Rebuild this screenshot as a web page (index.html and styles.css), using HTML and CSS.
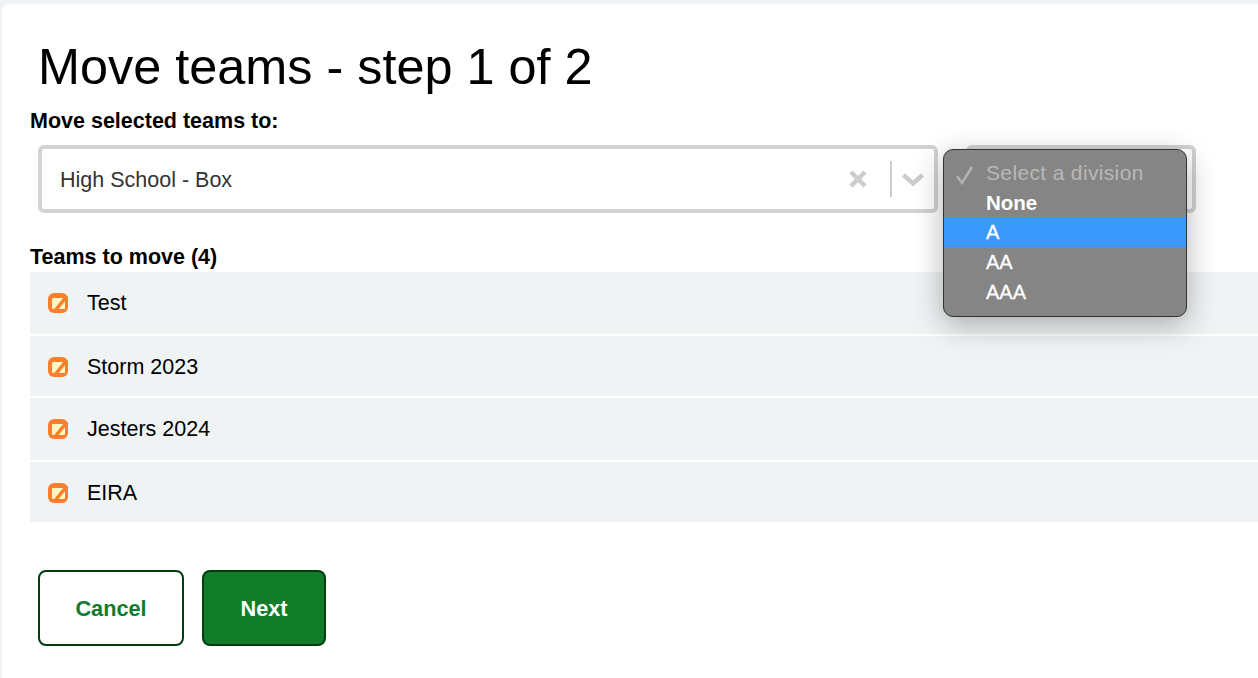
FILE: index.html
```html
<!DOCTYPE html>
<html lang="en">
<head>
    <meta charset="UTF-8">
    <title>Move teams</title>
    <link rel="stylesheet" href="styles.css">
</head>
<body>
    <div class="card">
        <h1 class="page-title">Move teams - step 1 of 2</h1>
        <div class="field-label">Move selected teams to:</div>
        <div class="select-row">
            <div class="select-box select-main">
                <span class="select-value">High School - Box</span>
                <svg class="select-clear" width="20" height="20" viewBox="0 0 20 20"><path d="M3 3L17 17M17 3L3 17" stroke="#cccccc" stroke-width="4.5" fill="none"/></svg>
                <span class="select-sep"></span>
                <svg class="select-arrow" width="22" height="14" viewBox="0 0 22 14"><path d="M1.5 3L11 11.5L20.5 3" stroke="#cccccc" stroke-width="4.5" fill="none"/></svg>
            </div>
            <div class="select-box select-division"></div>
        </div>
        <div class="field-label teams-label">Teams to move (4)</div>
        <ul class="team-list">
            <li class="team-row">
                <svg class="team-icon" width="22" height="22" viewBox="0 0 22 22"><rect x="1" y="1" width="20" height="20" rx="6" fill="#fb7e2d"/><rect x="5" y="6" width="13" height="11" rx="1" fill="#fff6c4"/><path d="M7 20L20 4" stroke="#fb7e2d" stroke-width="3.5"/></svg>
                <span>Test</span>
            </li>
            <li class="team-row">
                <svg class="team-icon" width="22" height="22" viewBox="0 0 22 22"><rect x="1" y="1" width="20" height="20" rx="6" fill="#fb7e2d"/><rect x="5" y="6" width="13" height="11" rx="1" fill="#fff6c4"/><path d="M7 20L20 4" stroke="#fb7e2d" stroke-width="3.5"/></svg>
                <span>Storm 2023</span>
            </li>
            <li class="team-row">
                <svg class="team-icon" width="22" height="22" viewBox="0 0 22 22"><rect x="1" y="1" width="20" height="20" rx="6" fill="#fb7e2d"/><rect x="5" y="6" width="13" height="11" rx="1" fill="#fff6c4"/><path d="M7 20L20 4" stroke="#fb7e2d" stroke-width="3.5"/></svg>
                <span>Jesters 2024</span>
            </li>
            <li class="team-row">
                <svg class="team-icon" width="22" height="22" viewBox="0 0 22 22"><rect x="1" y="1" width="20" height="20" rx="6" fill="#fb7e2d"/><rect x="5" y="6" width="13" height="11" rx="1" fill="#fff6c4"/><path d="M7 20L20 4" stroke="#fb7e2d" stroke-width="3.5"/></svg>
                <span>EIRA</span>
            </li>
        </ul>
        <div class="actions">
            <button class="btn btn-cancel">Cancel</button>
            <button class="btn btn-next">Next</button>
        </div>
        <div class="division-menu">
            <div class="menu-item menu-placeholder">
                <svg class="menu-check" width="20" height="20" viewBox="0 0 20 20"><path d="M2 11L7 18L17 2" stroke="#b4b4b4" stroke-width="2.4" fill="none"/></svg>
                Select a division
            </div>
            <div class="menu-item menu-none">None</div>
            <div class="menu-item menu-active">A</div>
            <div class="menu-item">AA</div>
            <div class="menu-item">AAA</div>
        </div>
    </div>
</body>
</html>
```

FILE: styles.css
```css
* {
    margin: 0;
    padding: 0;
    box-sizing: border-box;
    font-family: "Liberation Sans", Arial, sans-serif;
}

body {
    width: 1258px;
    height: 678px;
    overflow: hidden;
    background-color: #eff3f5;
    padding: 4px 0 0 2px;
}

.card {
    position: relative;
    height: 674px;
    background-color: white;
    border-radius: 8px 0 0 0;
    padding: 27px 0 0 28px;
}

.page-title {
    margin-left: 8px;
    font-size: 50.4px;
    line-height: 72px;
    font-weight: 400;
    color: #000;
}

.field-label {
    margin-top: 6px;
    font-size: 21.5px;
    line-height: 24px;
    font-weight: 700;
    color: #000;
}

.select-row {
    display: flex;
    gap: 28px;
    margin: 12px 0 0 8px;
}

.select-box {
    height: 68px;
    border: 4px solid #d2d2d2;
    border-radius: 6px;
    background-color: white;
}

.select-main {
    width: 900px;
    display: flex;
    align-items: center;
    padding: 0 10px 0 18px;
}

.select-division {
    width: 230px;
}

.select-value {
    flex: 1;
    padding-top: 2px;
    font-size: 21.5px;
    color: #333;
}

.select-clear {
    margin-right: 22px;
}

.select-sep {
    width: 2px;
    height: 36px;
    background-color: #cccccc;
    margin-right: 10px;
}

.teams-label {
    margin-top: 32px;
}

.team-list {
    list-style: none;
    display: flex;
    flex-direction: column;
    gap: 2px;
    margin-top: 3px;
}

.team-row {
    height: 60px;
    display: flex;
    align-items: center;
    padding: 2px 0 0 17px;
    background-color: #f0f3f4;
    font-size: 21.5px;
    color: #000;
}

.team-row:nth-child(odd) {
    height: 62px;
    padding-top: 0;
}

.team-icon {
    margin-right: 18px;
}

.actions {
    display: flex;
    gap: 18px;
    margin: 48px 0 0 8px;
}

.btn {
    height: 76px;
    padding-top: 2px;
    border: 2px solid #003d0c;
    border-radius: 8px;
    font-size: 21.7px;
    font-weight: 700;
}

.btn-cancel {
    width: 146px;
    background-color: white;
    color: #117c2a;
}

.btn-next {
    width: 124px;
    background-color: #117c2a;
    color: white;
}

.division-menu {
    position: absolute;
    left: 941px;
    top: 145px;
    width: 244px;
    height: 168px;
    padding-top: 8px;
    background-color: #858585;
    border: 1px solid #333;
    border-radius: 10px;
    box-shadow: 0 8px 30px rgba(0, 0, 0, 0.3);
}

.menu-item {
    position: relative;
    height: 30px;
    line-height: 30px;
    padding-left: 42px;
    font-size: 20px;
    color: white;
    -webkit-text-stroke: 0.3px white;
}

.menu-placeholder {
    font-size: 21px;
    color: #b8b8b8;
    -webkit-text-stroke: 0;
    letter-spacing: 0.35px;
}

.menu-check {
    position: absolute;
    left: 11px;
    top: 7px;
}

.menu-none {
    height: 29px;
    font-size: 20.5px;
    font-weight: 700;
    -webkit-text-stroke: 0;
}

.menu-active {
    background-color: #3b99fc;
}
```
